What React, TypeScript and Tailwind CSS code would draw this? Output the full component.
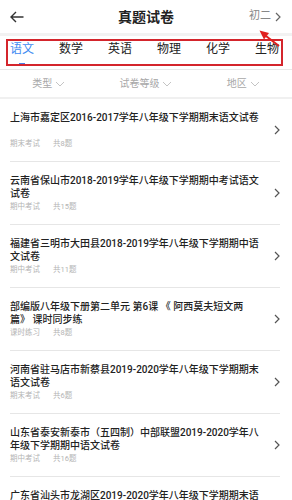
import React from 'react';

const subjects = ['语文', '数学', '英语', '物理', '化学', '生物'];
const filters = ['类型', '试卷等级', '地区'];

// title lines are kept as they wrap on the device
const papers = [
  { lines: ['上海市嘉定区2016-2017学年八年级下学期期末语文试卷'], type: '期末考试', count: 8 },
  { lines: ['云南省保山市2018-2019学年八年级下学期期中考试语文', '试卷'], type: '期中考试', count: 15 },
  { lines: ['福建省三明市大田县2018-2019学年八年级下学期期中语', '文试卷'], type: '期中考试', count: 11 },
  { lines: ['部编版八年级下册第二单元 第6课 《 阿西莫夫短文两', '篇》 课时同步练'], type: '课时练习', count: 8 },
  { lines: ['河南省驻马店市新蔡县2019-2020学年八年级下学期期末', '语文试卷'], type: '期末考试', count: 6 },
  { lines: ['山东省泰安新泰市（五四制）中部联盟2019-2020学年八', '年级下学期期中语文试卷'], type: '期中考试', count: 16 },
  { lines: ['广东省汕头市龙湖区2019-2020学年八年级下学期期末语', '文试卷'], type: '期末考试', count: 12 },
];

function ChevronRight({ className = '' }: { className?: string }) {
  return (
    <svg width="6" height="10" viewBox="0 0 6 10" className={className}>
      <path d="M1 1 L5 5 L1 9" fill="none" stroke="currentColor" strokeWidth="1.2" />
    </svg>
  );
}

function ChevronDown() {
  return (
    <svg width="10" height="6" viewBox="0 0 10 6" className="text-[#c4c4c4]">
      <path d="M1 1 L5 5 L9 1" fill="none" stroke="currentColor" strokeWidth="1" />
    </svg>
  );
}

export default function App() {
  return (
    <div className="relative w-[292px] h-[500px] overflow-hidden bg-white font-['Roboto','Noto_Sans_CJK_SC',sans-serif]">
      {/* Header */}
      <div className="grid grid-cols-[1fr_auto_1fr] items-center h-[33px] px-[10px]">
        <svg width="14" height="12" viewBox="0 0 14 12" className="text-[#333]">
          <path d="M13.5 6 H1.2 M6 1 L1 6 L6 11" fill="none" stroke="currentColor" strokeWidth="1.4" />
        </svg>
        <h1 className="text-[14px] font-bold text-[#222] leading-none">真题试卷</h1>
        <div className="flex items-center justify-end gap-[4px] pr-[1px] text-[11px] text-[#888]">
          <span>初二</span>
          <ChevronRight className="text-[#666]" />
        </div>
      </div>
      <div className="h-[3px] bg-[#f2f2f2]" />

      {/* Subject tabs */}
      <div className="relative h-[33px]">
        <div className="flex gap-[25px] pl-[10px] pt-[5px]">
          {subjects.map((s, i) => (
            <div key={s} className="flex flex-col items-center">
              <span className={`text-[12px] leading-[16px] ${i === 0 ? 'text-[#3f8cf2]' : 'text-[#222]'}`}>{s}</span>
              {i === 0 && <div className="mt-[6px] w-[6px] h-[2px] bg-[#4a7fe6]" />}
            </div>
          ))}
        </div>
        <div className="absolute left-[6px] right-[9px] top-[3px] h-[27px] border-2 border-[#d4252c] pointer-events-none" />
      </div>
      <div className="h-px bg-[#e8e8e8]" />

      {/* Filters */}
      <div className="grid grid-cols-3 h-[27px]">
        {filters.map((f) => (
          <div key={f} className="flex items-center justify-center gap-[3px] text-[10px] text-[#a8a8a8]">
            <span>{f}</span>
            <ChevronDown />
          </div>
        ))}
      </div>
      <div className="h-[2px] bg-[#f0f0f0]" />

      {/* List */}
      <div className="ml-[10px] mr-[12px]">
        {papers.map((p) => (
          <div key={p.lines[0]} className="flex items-center h-[63px] border-b border-[#e6e6e6]">
            <div className="flex flex-col justify-between h-full pt-[12px] pb-[12px] flex-1">
              <div className="text-[10px] leading-[13px] font-medium text-[#222]">
                {p.lines.map((l) => (
                  <div key={l} className="whitespace-nowrap">{l}</div>
                ))}
              </div>
              <div className="flex gap-[13px] text-[7.5px] leading-[10px] text-[#b4b4b4]">
                <span>{p.type}</span>
                <span>共{p.count}题</span>
              </div>
            </div>
            <ChevronRight className="text-[#555] shrink-0" />
          </div>
        ))}
      </div>

      {/* Annotation arrow */}
      <svg className="absolute left-0 top-0 pointer-events-none" width="292" height="70" viewBox="0 0 292 70">
        <line x1="279" y1="46" x2="266" y2="36" stroke="#e0201e" strokeWidth="2" />
        <polygon points="259.5,30.5 269,33 264,39.5" fill="#e0201e" />
      </svg>
    </div>
  );
}
